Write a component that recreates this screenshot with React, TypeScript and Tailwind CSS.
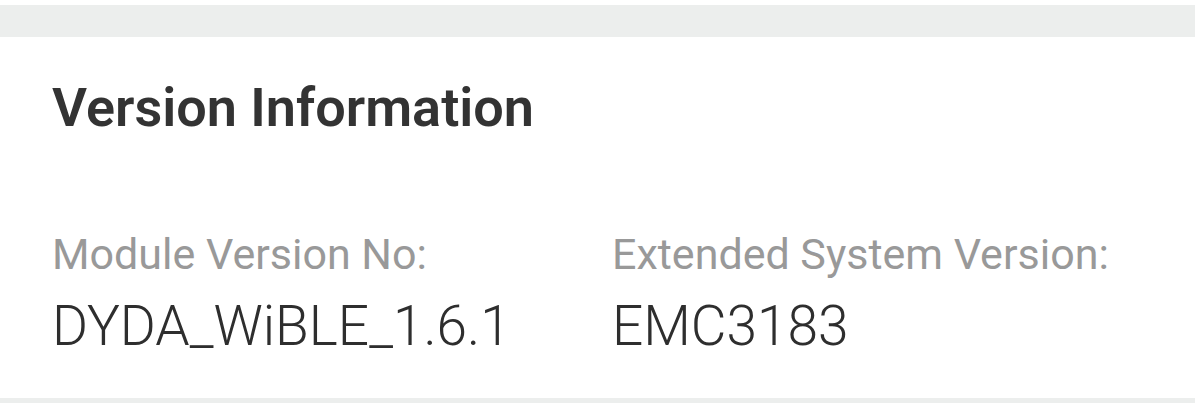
const items = [
  { label: "Module Version No:", value: "DYDA_WiBLE_1.6.1" },
  { label: "Extended System Version:", value: "EMC3183" },
];

export default function App() {
  return (
    <div className="w-[1195px] h-[403px] bg-white flex flex-col overflow-hidden font-['Roboto',sans-serif]">
      <div className="h-[5px] bg-white" />
      <div className="h-[32px] bg-[#eceeed]" />
      <div className="flex-1 bg-white pl-[52px] pt-[44px]">
        <h2 className="text-[54px] leading-none font-semibold text-[#333333]">Version Information</h2>
        <div className="mt-[98px] grid grid-cols-[560px_1fr]">
          {items.map((it) => (
            <div key={it.label} className="flex flex-col gap-[23px]">
              <span className="text-[43px] leading-none text-[#999999]">{it.label}</span>
              <span className="text-[55px] leading-none font-light text-[#2e2e2e]">{it.value}</span>
            </div>
          ))}
        </div>
      </div>
      <div className="h-[5px] bg-[#eceeed]" />
    </div>
  );
}
